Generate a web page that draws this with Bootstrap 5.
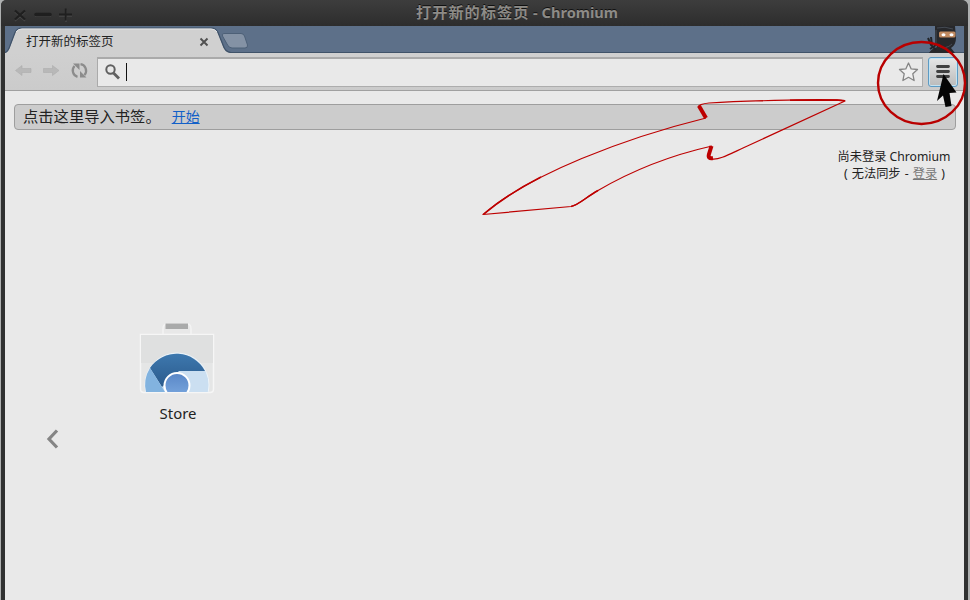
<!DOCTYPE html>
<html lang="zh-CN">
<head>
<meta charset="utf-8">
<meta name="viewport" content="width=device-width, initial-scale=1">
<title>打开新的标签页 - Chromium</title>
<link href="https://cdn.jsdelivr.net/npm/bootstrap@5.3.0/dist/css/bootstrap.min.css" rel="stylesheet">
<style>
body{background:#aeb0b0;font-family:"Noto Sans","Noto Sans CJK SC",sans-serif;color:#222;height:600px;line-height:1}
svg{display:block;flex:none}
.win{width:967px;height:600px;margin-left:1px;background:#e9e9e9;border:solid #303131;border-width:0 4px;border-top-left-radius:6px;border-top-right-radius:7px}
.titlebar{height:26px;margin:0 -4px;background:linear-gradient(#3d3d3d,#2d2d2d);border-radius:5px 6px 0 0}
.win-title{color:#8d8b87;font:700 14.6px/25px "Noto Sans","Noto Sans CJK SC",sans-serif;text-shadow:0 -1px #111;white-space:nowrap;margin-left:337px}
.win-title .zh{font-size:15.2px;letter-spacing:1px}
.strip{height:27px;background:#5d7089}
.tab-label{left:21px;top:10px;font-size:12.5px;white-space:nowrap}
.bar{height:38px;background:linear-gradient(#d0d0d0,#cbcbcb);border-bottom:1px solid #a0a0a0}
.omni{width:826px;height:30px;margin-left:92px;background:#e9e9e9;border:1px solid #adadad;border-top:2px solid #aaa;border-left-color:#aaa}
.nav-ic{left:0;top:0}
.caret{width:1px;height:18px;background:#111}
.menu-btn{width:30px;height:30px;margin-right:6px;border:1px solid #5d9bc4;border-radius:3px;background:linear-gradient(#e6e6e6,#bbb);box-shadow:inset 0 0 0 1px #c4e3f2}
.import-bar{height:26px;margin:13px 8px 0 9px;padding-left:8px;border:1px solid #9e9e9e;border-radius:4px;background:#cccccc;font-size:15.3px}
.start{font-size:14px;color:#1260c8;margin-left:11px}
.account{font-size:12.2px;line-height:17px;width:128px;margin:18px 6px 0 auto}
.login{color:#777}
.sync{word-spacing:1px;padding-left:1px}
.store{width:90px;margin:137px 0 0 126px}
.store-name{font-size:14.9px;line-height:20px;margin:8px 0 0 4px}
.prev{margin:6px 0 0 41px}
</style>
<script src="https://cdn.jsdelivr.net/npm/bootstrap@5.3.0/dist/js/bootstrap.bundle.min.js"></script>
</head>
<body class="overflow-hidden position-relative">
<div class="win">
  <header class="titlebar d-flex">
    <svg width="78" height="26" fill="none" stroke="#1f1f1f" stroke-width="2.300"><g stroke="#474747" transform="translate(0 1)" stroke-width="1.500"><path d="M14 11l10 9M24 11l-10 9M34 15h16M58 15h13M65 9v12"/></g><path d="M14 10.500l10 9M24 10.500l-10 9"/><path d="M35 14.500h14" stroke-width="3.500" stroke-linecap="round"/><path d="M58 14.500h13M64.700 8.500v12" stroke-width="1.800"/></svg>
    <div class="win-title"><span class="zh">打开新的标签页</span> - Chromium</div>
  </header>
  <div class="strip position-relative">
    <svg width="959" height="27">
      <path d="M0 26.500H959" stroke="#405369"/>
      <path d="M0 27C4 26 4 23 6 18L10 7Q12 2.500 17 2.500H206Q211 2.500 213 7L218 20Q220 26 226 27Z" fill="#d0d0d0"/>
      <path d="M0 26.500C4 25 4 22 6 17L10 6.500Q12 2 17 2H206Q211 2 213 6.500L218 19Q220 26 226 26.500" fill="none" stroke="#3f5269" stroke-width="1.200"/>
      <path d="M11 6Q13 3 17 3H206Q210 3 212 6" fill="none" stroke="#e4e4e4"/>
      <path d="M219 7.500H236Q238.500 7.500 239.500 10L242.500 19Q243 22 240 22H227Q223.500 22 222 18L217.500 10Q216.500 7.500 219 7.500Z" fill="#8492a5" stroke="#4d6077"/>
      <path d="M195.500 12.500l7 7M202.500 12.500l-7 7" stroke="#505050" stroke-width="1.900"/>
      <g transform="translate(-5 -26)">
        <path d="M935 26H955L956 38Q956 45 951 48L955 53H929Q931 49 937 47L935 43Z" fill="#27282b"/>
        <path d="M937 28Q945 26 953 29M938 46Q946 50 952 44M936 30V43" fill="none" stroke="#454b54"/>
        <path d="M928 38l3 7 5 5M931 37l1 8M930 49l6-4" stroke="#222428" stroke-width="2" fill="none"/>
        <rect x="939" y="31.500" width="16.500" height="6" rx="1.500" fill="#c08a60"/><ellipse cx="943.500" cy="34.700" rx="2" ry="1.500" fill="#fff"/><ellipse cx="951.500" cy="34.700" rx="2" ry="1.500" fill="#fff"/>
      </g>
    </svg>
    <div class="tab-label position-absolute">打开新的标签页</div>
  </div>
  <div class="bar d-flex align-items-center position-relative">
    <svg class="nav-ic position-absolute" width="92" height="37">
      <g fill="#b8b8b8" stroke="#acacac" stroke-width=".6"><path d="M10.500 17.500L17 12.500V15.500H26V19.500H17V22.500Z"/><path d="M54 17.500L47.500 12.500V15.500H38.500V19.500H47.500V22.500Z"/></g>
      <g fill="none" stroke="#8c8c8c" stroke-width="2.300"><path d="M72.500 23.800A6.600 6.600 0 0 1 69.500 13"/><path d="M75.500 11.200A6.600 6.600 0 0 1 79.500 22"/></g>
      <path d="M68 10.500H74.500V17ZM81.500 24.500H75V18Z" fill="#8c8c8c"/>
    </svg>
    <div class="omni d-flex align-items-center">
      <svg width="28" height="26" fill="none" stroke="#606060"><circle cx="12.500" cy="10.500" r="4.200" stroke-width="2"/><path d="M15.500 14l5.500 5.500" stroke-width="2.800"/></svg>
      <span class="caret"></span>
      <svg class="ms-auto" width="24" height="26"><path d="M10.500 4l2.700 5.900 6.300.6-4.700 4.300 1.300 6.700-5.600-3.200-5.600 3.200 1.300-6.700-4.700-4.300 6.300-.6Z" fill="#f0f0f0" stroke="#858585" stroke-width="1.300" stroke-linejoin="round"/></svg>
    </div>
    <div class="menu-btn ms-auto">
      <svg width="28" height="28"><path d="M8.500 8.500h11M8.500 13.500h11M8.500 18.500h11" stroke="#404040" stroke-width="2.800" stroke-linecap="round"/></svg>
    </div>
  </div>
  <main>
    <div class="import-bar d-flex align-items-center"><span>点击这里导入书签。</span><a href="#" class="start">开始</a></div>
    <div class="account text-center"><div class="text-nowrap">尚未登录 Chromium</div><div class="sync text-nowrap">( 无法同步 - <a href="#" class="login">登录</a> )</div></div>
    <div class="store d-flex flex-column align-items-center">
      <svg width="78" height="76" viewBox="137 319 78 76">
        <defs><linearGradient id="blue" x2="0" y2="1"><stop stop-color="#3d78ae"/><stop offset="1" stop-color="#2b5a8c"/></linearGradient><linearGradient id="ball" x2="0" y2="1"><stop stop-color="#5987c7"/><stop offset="1" stop-color="#7ba8df"/></linearGradient><clipPath id="bag"><path d="M140 335H213V392H140Z"/></clipPath></defs>
        <path d="M163 335V329Q163 324 167 324H187Q191 324 191 329V335" fill="#e8e8e8" stroke="#f3f3f3" stroke-width="1.500"/>
        <rect x="165.500" y="323.500" width="22.500" height="5.500" fill="#a9aaaa"/>
        <path d="M140.500 334.500H213.500V389Q213.500 392.500 210 392.500H144Q140.500 392.500 140.500 389Z" fill="#e5e6e6" stroke="#f6f6f6" stroke-width="1.500"/>
        <path d="M141 335H213V363H141Z" fill="#dfe0e0"/>
        <g clip-path="url(#bag)"><circle cx="177" cy="385" r="32" fill="#cbdff1" stroke="#edf4f9"/><path d="M150 368A32 32 0 0 1 205 371H179L162 387Z" fill="url(#blue)"/><path d="M150 368A32 32 0 0 0 146 392H165Z" fill="#82b3df"/><circle cx="177" cy="385.500" r="12.500" fill="url(#ball)" stroke="#fff" stroke-width="2"/></g>
      </svg>
      <div class="store-name">Store</div>
    </div>
    <svg class="prev" width="13" height="20"><path d="M11 1.500L3 10L11 18.500" fill="none" stroke="#858585" stroke-width="3.200"/></svg>
  </main>
</div>
<svg class="position-absolute top-0 start-0 pe-none" width="970" height="600">
  <ellipse cx="921.500" cy="83" rx="43.500" ry="41" fill="none" stroke="#b90000" stroke-width="2.400"/>
  <g fill="none" stroke="#bd0000" stroke-width="1.200" stroke-linejoin="round">
    <path d="M706 118C625 138 530 174 483 214.500L571 206.500C579 205 586 197 598 190.500Q650 160 712 146M712 159C719 160 728 155 743 148L845 101C842 98 740 101 709 103Q699 104 698 107"/>
    <path d="M484 214Q506 195 541 177M571 206.500C579 205 586 197 598 190.500M790 100.200L837 100L844 101" stroke-width="1.500"/>
    <path d="M699 106L706 118" stroke-width="4"/><path d="M711.500 146L709 154Q707.500 159 713 158" stroke-width="4"/>
  </g>
  <path d="M943.500 74L956.500 92.500L949.500 93L951.500 106L945.500 107L943 95.500L937 101Z" fill="#050505"/>
</svg>
</body>
</html>
